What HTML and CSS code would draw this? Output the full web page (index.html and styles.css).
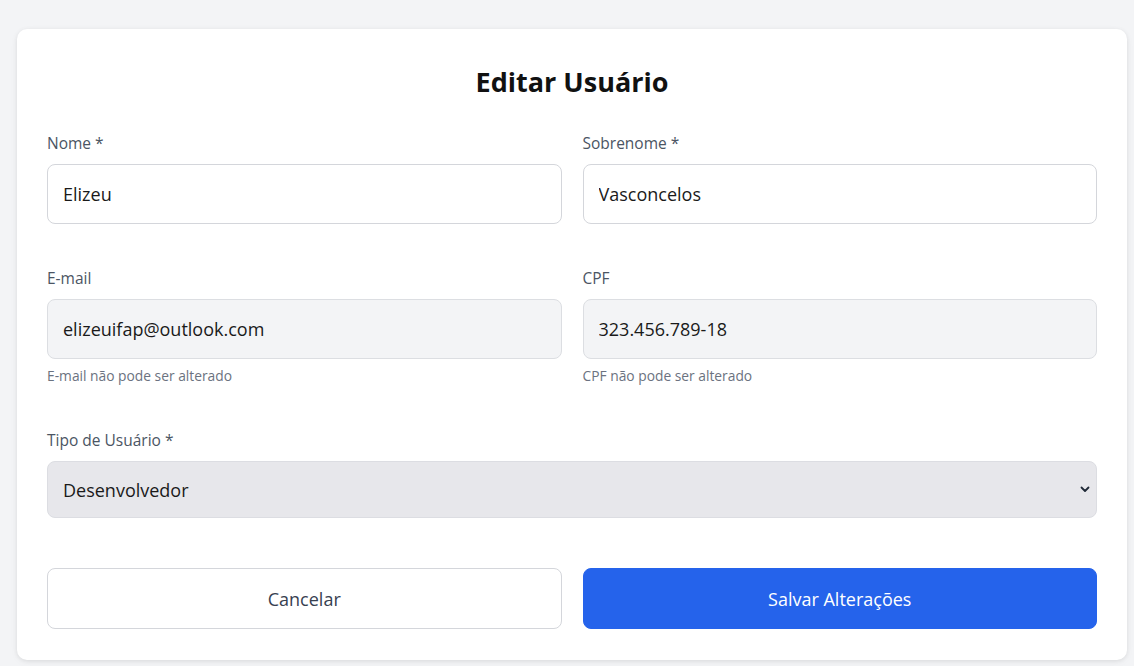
FILE: index.html
```html
<!DOCTYPE html>
<html lang="pt-BR">
<head>
<meta charset="utf-8">
<title>Editar Usuário</title>
<link rel="stylesheet" href="styles.css">
</head>
<body>
<main class="page">
  <form class="card">
    <h1 class="title">Editar Usuário</h1>
    <div class="grid">
      <div class="field">
        <label class="label">Nome *</label>
        <input class="input" type="text" value="Elizeu">
      </div>
      <div class="field">
        <label class="label">Sobrenome *</label>
        <input class="input" type="text" value="Vasconcelos">
      </div>
      <div class="field">
        <label class="label">E-mail</label>
        <input class="input input-locked" type="text" value="elizeuifap@outlook.com" readonly>
        <p class="hint">E-mail não pode ser alterado</p>
      </div>
      <div class="field">
        <label class="label">CPF</label>
        <input class="input input-locked" type="text" value="323.456.789-18" readonly>
        <p class="hint">CPF não pode ser alterado</p>
      </div>
      <div class="field field-wide">
        <label class="label">Tipo de Usuário *</label>
        <div class="select-wrap">
          <select class="select">
            <option>Desenvolvedor</option>
            <option>Administrador</option>
          </select>
          <svg class="chevron" viewBox="0 0 12 12" width="12" height="12" aria-hidden="true">
            <path d="M2.5 4.5 L6 8 L9.5 4.5" fill="none" stroke="#1f2937" stroke-width="1.8" stroke-linecap="round" stroke-linejoin="round"/>
          </svg>
        </div>
      </div>
    </div>
    <div class="actions">
      <button type="button" class="btn btn-cancel">Cancelar</button>
      <button type="submit" class="btn btn-save">Salvar Alterações</button>
    </div>
  </form>
</main>
</body>
</html>
```
FILE: styles.css
```css
* {
  box-sizing: border-box;
}

html, body {
  margin: 0;
  padding: 0;
  background: #f3f4f6;
}

body {
  font-family: "Open Sans", "Noto Sans", sans-serif;
  color: #111827;
}

.page {
  padding: 29px 7px 6px 17px;
}

.card {
  width: 1110px;
  background: #ffffff;
  border-radius: 10px;
  box-shadow: 0 1px 4px rgba(0, 0, 0, 0.08), 0 2px 8px rgba(0, 0, 0, 0.04);
  padding: 35px 30px 31px 30px;
}

.title {
  margin: 0 0 32px 0;
  text-align: center;
  font-size: 27px;
  line-height: 36px;
  font-weight: 700;
  color: #111111;
}

.grid {
  display: grid;
  grid-template-columns: 1fr 1fr;
  column-gap: 21px;
  row-gap: 43px;
}

.field {
  display: flex;
  flex-direction: column;
}

.field-wide {
  grid-column: 1 / span 2;
}

.label {
  font-size: 15.5px;
  line-height: 22px;
  color: #4b5563;
  margin-bottom: 10px;
}

.input {
  height: 60px;
  width: 100%;
  border: 1px solid #d4d6db;
  border-radius: 8px;
  background: #ffffff;
  padding: 0 15px;
  font-family: inherit;
  font-size: 18px;
  color: #1a1a1a;
  outline: none;
}

.input-locked {
  background: #f3f4f6;
  border-color: #dcdee2;
}

.hint {
  margin: 7px 0 0 0;
  font-size: 13.8px;
  line-height: 20px;
  color: #6b7280;
}

.select-wrap {
  position: relative;
}

.select {
  display: block;
  width: 100%;
  height: 57px;
  border: 1px solid #dcdde2;
  border-radius: 8px;
  background: #e7e7eb;
  padding: 0 40px 0 15px;
  font-family: inherit;
  font-size: 18px;
  color: #1a1a1a;
  -webkit-appearance: none;
  appearance: none;
  outline: none;
}

.chevron {
  position: absolute;
  right: 6px;
  top: 22px;
}

.actions {
  display: grid;
  grid-template-columns: 1fr 1fr;
  column-gap: 21px;
  margin-top: 50px;
}

.btn {
  height: 61px;
  border-radius: 8px;
  font-family: inherit;
  font-size: 18px;
  cursor: pointer;
}

.btn-cancel {
  background: #ffffff;
  border: 1px solid #d4d6db;
  color: #374151;
}

.btn-save {
  background: #2563eb;
  border: 1px solid #2563eb;
  color: #ffffff;
}
```
